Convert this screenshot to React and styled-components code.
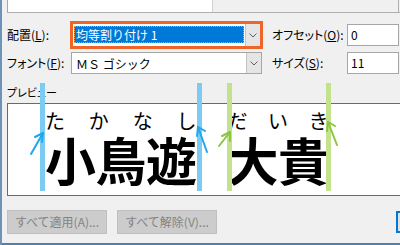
import React from 'react';
import styled, { createGlobalStyle } from 'styled-components';

const Global = createGlobalStyle`
  html, body { margin: 0; padding: 0; background: #f0f0f0; }
  body { font-family: "Noto Sans CJK JP", "Noto Sans", sans-serif; }
`;

const Frame = styled.div`
  position: relative;
  width: 400px;
  height: 245px;
  overflow: hidden;
  box-sizing: border-box;
  padding-left: 7px;
  background: #f0f0f0;
  box-shadow: inset 2px 0 0 #6d94b8, inset 0 -2px 0 #4f80ad;
  display: flex;
  flex-direction: column;
  color: #000;
`;

const TopStrip = styled.div`
  display: flex;
  height: 13px;
  box-sizing: border-box;
  border-bottom: 1px solid #b0b0b0;
`;

const TopCell = styled.div`
  width: 206px;
  box-sizing: border-box;
  background: #fff;
  border-left: 1px solid #a8a8a8;
  border-right: 1px solid #d0d0d0;
`;

const TopRest = styled.div`
  flex: 1;
  margin-right: 1px;
  border-right: 1px solid #b0b0b0;
`;

const Row = styled.div`
  display: flex;
  align-items: center;
  height: ${p => p.$h}px;
  margin-top: ${p => p.$mt}px;
`;

const Label = styled.div`
  width: ${p => p.$w}px;
  flex: none;
  font-size: 12px;
  line-height: 14px;
  font-feature-settings: "palt";
  white-space: nowrap;
  u { text-underline-offset: 1px; }
`;

const Highlight = styled.div`
  width: 193px;
  height: 28px;
  box-sizing: border-box;
  border: 3px solid #ef6428;
  background: #fff;
  display: flex;
  flex: none;
`;

const Combo = styled.div`
  display: flex;
  flex: none;
  box-sizing: border-box;
  background: #fff;
  ${p => p.$framed ? 'width: 191px; height: 22px; border: 1px solid #a6a6a6; margin-right: 10px;' : 'flex: 1; height: 22px; margin-right: 0;'}
`;

const Field = styled.div`
  flex: 1;
  display: flex;
  padding: ${p => p.$sel ? '2px 1px 3px 1px' : '0 0 0 4px'};
  align-items: center;
  font-size: 12px;
`;

const Selection = styled.div`
  flex: 1;
  align-self: stretch;
  display: flex;
  align-items: center;
  box-sizing: border-box;
  padding-left: 1px;
  background: #0078d7;
  color: #fff;
  border: 1px dotted #f0a050;
  font-size: 12px;
`;

const DropBtn = styled.div`
  width: 15px;
  flex: none;
  box-sizing: border-box;
  background: #e5e5e5;
  border-left: 1px solid #c4c4c4;
  display: flex;
  align-items: center;
  justify-content: center;
`;

const TextBox = styled.div`
  width: 52px;
  height: 22px;
  flex: none;
  box-sizing: border-box;
  background: #fff;
  border: 1px solid #a6a6a6;
  padding-left: 3px;
  font-size: 12px;
  line-height: 20px;
`;

const PreviewLabel = styled.div`
  margin-top: 11px;
  height: 14px;
  font-size: 11px;
  line-height: 14px;
  font-feature-settings: "palt";
`;

const PreviewBox = styled.div`
  margin-top: 4px;
  width: 400px;
  height: 93px;
  flex: none;
  box-sizing: border-box;
  background: #fff;
  border: 1px solid #6a6a6a;
  border-right: none;
  display: flex;
  align-items: flex-start;
`;

const Group = styled.div`
  display: flex;
  flex-direction: column;
  margin-left: ${p => p.$ml}px;
  padding-top: 7px;
`;

const Ruby = styled.div`
  display: flex;
  justify-content: space-between;
  font-size: 20px;
  line-height: 20px;
  height: 20px;
  font-weight: 400;
`;

const Base = styled.div`
  margin-top: 3px;
  font-size: 51px;
  line-height: 51px;
  font-weight: 700;
  letter-spacing: -0.5px;
  white-space: nowrap;
`;

const ButtonRow = styled.div`
  display: flex;
  align-items: flex-start;
  margin-top: 14px;
  gap: 10px;
`;

const Button = styled.div`
  width: 100px;
  height: 24px;
  flex: none;
  box-sizing: border-box;
  background: #cccccc;
  border: 1px solid #bfbfbf;
  color: #838383;
  font-size: 12px;
  line-height: 22px;
  text-align: center;
`;

const FocusButton = styled.div`
  width: 80px;
  height: 22px;
  flex: none;
  margin-top: 1px;
  margin-left: 169px;
  box-sizing: border-box;
  background: #e1e1e1;
  border: 2px solid #0078d7;
`;

const Overlay = styled.svg`
  position: absolute;
  left: 0;
  top: 0;
  pointer-events: none;
`;

const Chevron = () => (
  <svg width="8" height="5" viewBox="0 0 8 5">
    <path d="M0.5 0.5 L4 4 L7.5 0.5" fill="none" stroke="#606060" strokeWidth="1" />
  </svg>
);

const Arrow = ({ tail, tip, w1, w2, color }) => (
  <g stroke={color} strokeWidth="2" fill="none" strokeLinecap="round" strokeLinejoin="round">
    <path d={`M${tail[0]} ${tail[1]} L${tip[0]} ${tip[1]}`} />
    <path d={`M${w1[0]} ${w1[1]} L${tip[0]} ${tip[1]} L${w2[0]} ${w2[1]}`} />
  </g>
);

export default function App() {
  return (
    <>
      <Global />
      <Frame>
        <TopStrip>
          <TopCell />
          <TopRest />
        </TopStrip>

        <Row $h={28} $mt={8}>
          <Label $w={63}>配置(<u>L</u>):</Label>
          <Highlight>
            <Combo>
              <Field $sel>
                <Selection>均等割り付け 1</Selection>
              </Field>
              <DropBtn><Chevron /></DropBtn>
            </Combo>
          </Highlight>
          <Label $w={75} style={{ marginLeft: 9 }}>オフセット(<u>O</u>):</Label>
          <TextBox>0</TextBox>
        </Row>

        <Row $h={22} $mt={3}>
          <Label $w={64}>フォント(<u>F</u>):</Label>
          <Combo $framed>
            <Field>ＭＳ ゴシック</Field>
            <DropBtn><Chevron /></DropBtn>
          </Combo>
          <Label $w={75}>サイズ(<u>S</u>):</Label>
          <TextBox>11</TextBox>
        </Row>

        <PreviewLabel>プレビュー</PreviewLabel>
        <PreviewBox>
          <Group $ml={37}>
            <Ruby>
              <span>た</span><span>か</span><span>な</span><span>し</span>
            </Ruby>
            <Base>小鳥遊</Base>
          </Group>
          <Group $ml={31}>
            <Ruby>
              <span>だ</span><span>い</span><span>き</span>
            </Ruby>
            <Base>大貴</Base>
          </Group>
        </PreviewBox>

        <ButtonRow>
          <Button>すべて適用(A)...</Button>
          <Button>すべて解除(V)...</Button>
          <FocusButton />
        </ButtonRow>

        <Overlay width="400" height="245" viewBox="0 0 400 245">
          <rect x="40" y="83" width="5" height="108" fill="#7ccbf3" />
          <rect x="197" y="83" width="5" height="108" fill="#7ccbf3" />
          <rect x="227" y="83" width="5" height="108" fill="#c4e28e" />
          <rect x="326" y="83" width="5" height="108" fill="#c4e28e" />
          <Arrow color="#22a6ee" tail={[31, 154]} tip={[43, 133]} w1={[35, 137]} w2={[42, 142]} />
          <Arrow color="#22a6ee" tail={[207, 152]} tip={[198, 127]} w1={[197, 136]} w2={[205, 131]} />
          <Arrow color="#8cc63e" tail={[219, 146]} tip={[230, 132]} w1={[222, 136]} w2={[230, 141]} />
          <Arrow color="#8cc63e" tail={[337, 145]} tip={[328, 122]} w1={[327, 131]} w2={[335, 126]} />
        </Overlay>
      </Frame>
    </>
  );
}
